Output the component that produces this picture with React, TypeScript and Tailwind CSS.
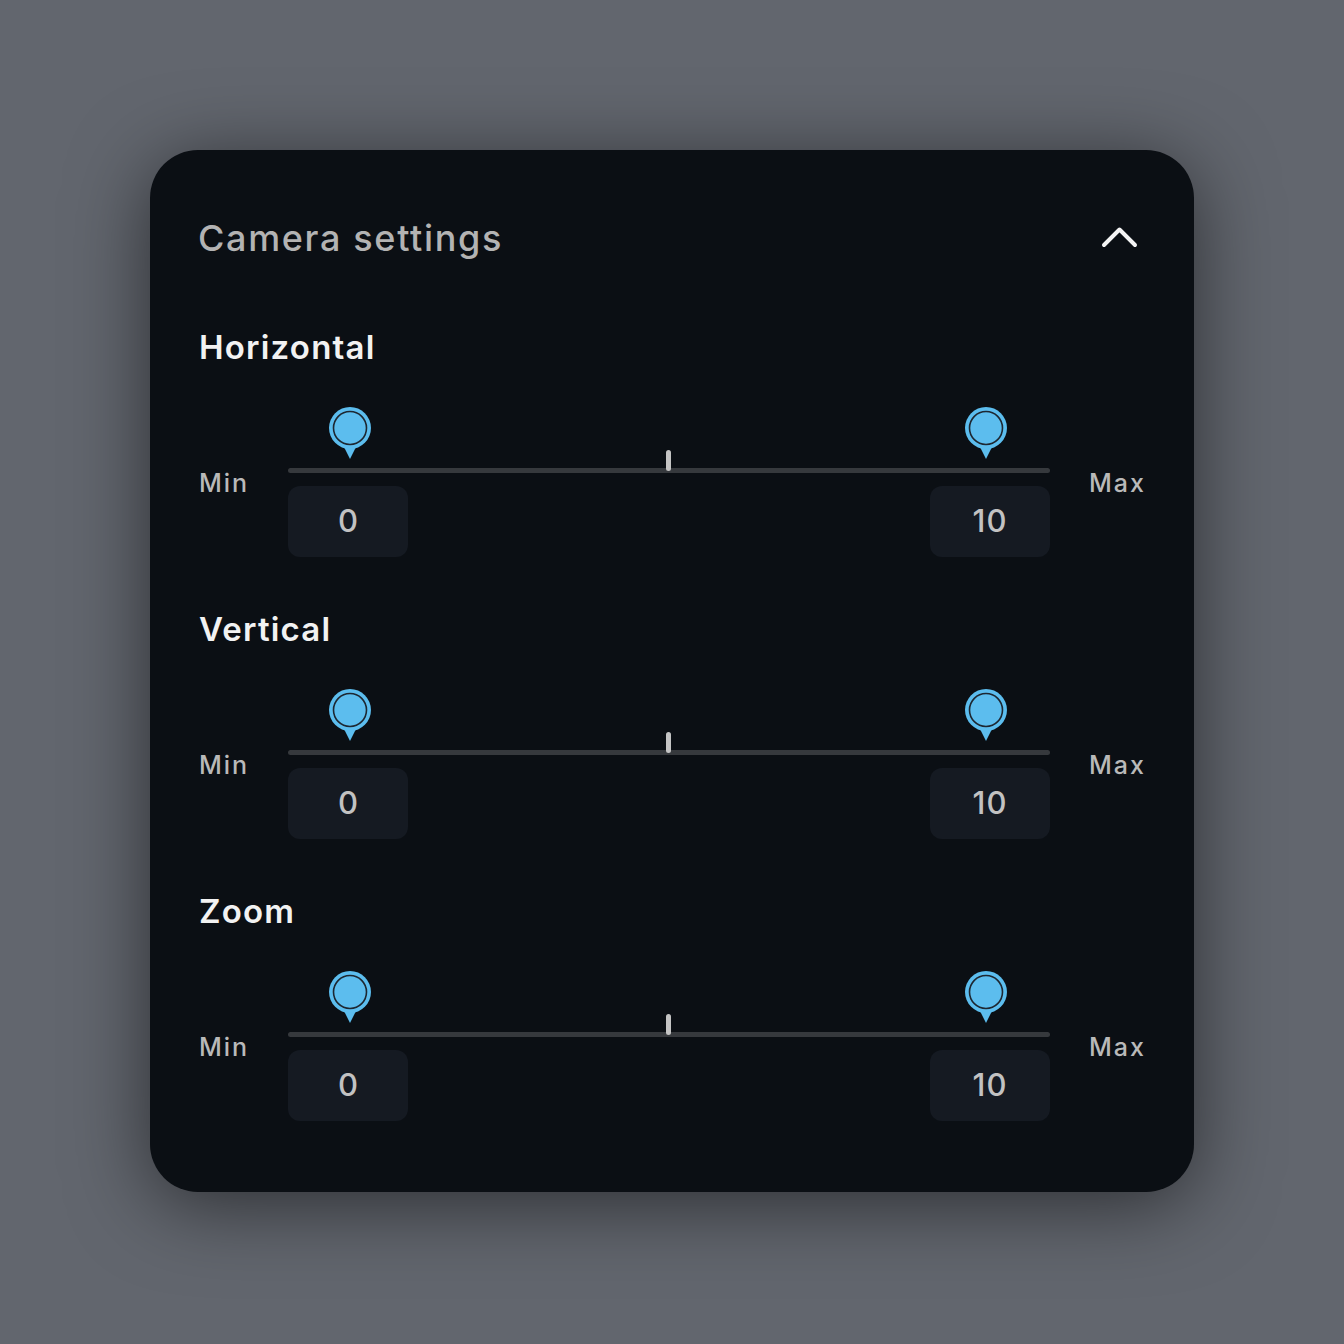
import React from "react";

const font = { fontFamily: "Inter, 'Noto Sans', sans-serif" };

function Pin() {
  return (
    <svg width="42" height="52" viewBox="0 0 42 52" className="block">
      <path d="M13 36 L21 52 L29 36 Z" fill="#5cbdee" strokeLinejoin="round" />
      <circle cx="21" cy="21" r="21" fill="#5cbdee" />
      <circle cx="21" cy="21" r="16.5" fill="none" stroke="#1d2731" strokeWidth="1.6" />
    </svg>
  );
}

function Section({ title }: { title: string }) {
  return (
    <div className="flex flex-col">
      <div className="text-[33px] leading-[40px] font-semibold text-[#f2f2f2] tracking-[1.2px]">{title}</div>
      <div className="mt-[40px] flex items-start">
        <div className="w-[89px] shrink-0 mt-[61px] text-[25px] leading-[30px] font-medium text-[#b9b9b9] tracking-[2px]">Min</div>
        <div className="w-[762px] shrink-0 flex flex-col">
          <div className="relative h-[66px]">
            <div className="absolute left-0 right-0 bottom-0 h-[5px] rounded-full bg-[#36393d]" />
            <div className="absolute left-[378px] top-[43px] w-[5px] h-[21px] rounded-full bg-[#c4c4c4]" />
            <div className="absolute left-[41px] top-0">
              <Pin />
            </div>
            <div className="absolute left-[677px] top-0">
              <Pin />
            </div>
          </div>
          <div className="mt-[13px] flex justify-between">
            <div className="w-[120px] h-[71px] rounded-[12px] bg-[#151a22] flex items-center justify-center text-[31px] font-medium text-[#c2c2c2]">0</div>
            <div className="w-[120px] h-[71px] rounded-[12px] bg-[#151a22] flex items-center justify-center text-[31px] font-medium text-[#c2c2c2] tracking-[1px]">10</div>
          </div>
        </div>
        <div className="ml-[39px] shrink-0 whitespace-nowrap mt-[61px] text-[25px] leading-[30px] font-medium text-[#b9b9b9] tracking-[2px]">Max</div>
      </div>
    </div>
  );
}

export default function App() {
  return (
    <div className="w-[1344px] h-[1344px] bg-[#62666e] pt-[150px] pl-[150px]" style={font}>
      <div className="w-[1044px] rounded-[48px] bg-[#0b0f14] shadow-[0_12px_80px_rgba(0,0,0,0.55)] px-[49px] pt-[66px] pb-[71px] flex flex-col">
        <div className="flex items-center justify-between">
          <div className="text-[36px] leading-[44px] font-medium text-[#b3b3b3] tracking-[1.65px] -ml-[1px]">Camera settings</div>
          <svg width="40" height="26" viewBox="0 0 40 26" className="mr-[5px]">
            <polyline points="4,20 19.5,4.5 35,20" fill="none" stroke="#f4f4f4" strokeWidth="4" strokeLinecap="round" strokeLinejoin="round" />
          </svg>
        </div>
        <div className="mt-[67px] flex flex-col gap-[52px]">
          <Section title="Horizontal" />
          <Section title="Vertical" />
          <Section title="Zoom" />
        </div>
      </div>
    </div>
  );
}
